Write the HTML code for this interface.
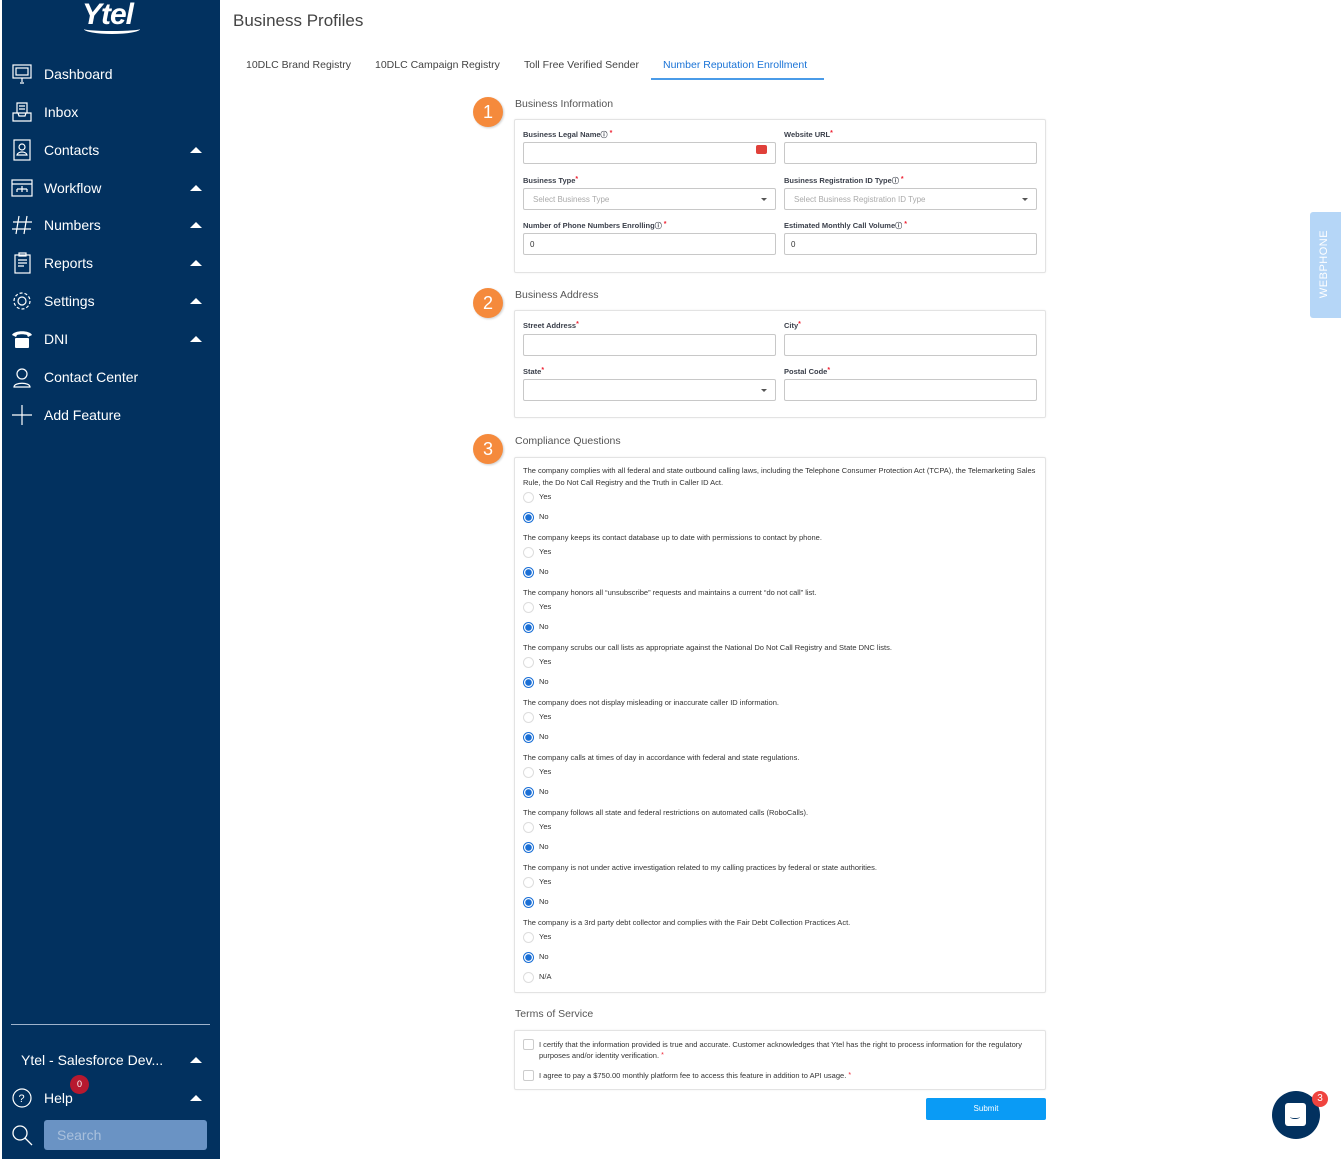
<!DOCTYPE html>
<html><head><meta charset="utf-8"><style>
*{margin:0;padding:0;box-sizing:border-box}
body{width:1341px;height:1159px;background:#fff;font-family:"Liberation Sans",sans-serif;position:relative;overflow:hidden;color:#333}
.a{position:absolute}
#sb{left:2px;top:0;width:218px;height:1159px;background:#02315f}
.ni{position:absolute;left:44px;color:#fff;font-size:14px;line-height:18px}
.ic{position:absolute;left:11px;width:22px;height:22px}
.tri{position:absolute;left:190px;width:0;height:0;border-left:6px solid transparent;border-right:6px solid transparent;border-bottom:6px solid #fff}
.box{position:absolute;border:1px solid #e3e3e3;border-radius:2px;background:#fff;box-shadow:0 0 2px rgba(0,0,0,.06)}
.lbl{position:absolute;font-size:7.5px;font-weight:bold;color:#3a3f4a}
.req{color:#e23;font-size:7px;vertical-align:top}
.inp{position:absolute;height:22px;border:1px solid #c8c8c8;border-radius:2px;background:#fff;font-size:8px;color:#333;padding:6px 6px}
.sel{color:#aaa}
.sel:after{content:"";position:absolute;right:8px;top:9px;border-left:3px solid transparent;border-right:3px solid transparent;border-top:3px solid #555}
.num{position:absolute;left:473px;width:30px;height:30px;border-radius:50%;background:#f58a3c;color:#fff;font-size:18px;text-align:center;line-height:30px;box-shadow:1px 1px 2px rgba(0,0,0,.2)}
.st{position:absolute;left:515px;font-size:10.5px;color:#555}
.q{position:absolute;left:523px;font-size:7.5px;color:#333;width:515px;line-height:12px}
.r{position:absolute;left:523px;width:11px;height:11px;border-radius:50%;border:1px solid #ddd;background:#fff}
.r.on{border:1px solid #1a6fd6;background:radial-gradient(circle,#1a6fd6 3px,#fff 3.5px)}
.rl{position:absolute;left:539px;font-size:7.5px;color:#333}
.cb{position:absolute;left:523px;width:11px;height:11px;border:1px solid #ccc;border-radius:2px}
.ti{color:#fff;background:#333}
</style></head><body>
<div id="sb" class="a"></div>
<div class="a" style="left:82px;top:-2px;color:#fff;font-size:30px;font-weight:bold;font-style:italic;letter-spacing:-1px">Ytel</div>
<div class="a" style="left:84px;top:24px;width:56px;height:10px;border-bottom:3px solid #fff;border-radius:0 0 50% 50%"></div>

<svg class="ic" style="top:63px" viewBox="0 0 22 22" fill="none" stroke="#fff" stroke-width="1.2"><rect x="2" y="2" width="18" height="13"/><rect x="5" y="5" width="12" height="7"/><path d="M11 15v4M9 20h4"/></svg>
<div class="ni" style="top:65px">Dashboard</div>
<svg class="ic" style="top:101px" viewBox="0 0 22 22" fill="none" stroke="#fff" stroke-width="1.2"><path d="M6 2h10v10H6zM2 12h5l1 3h6l1-3h5v8H2z"/><path d="M8 5h6M8 8h6"/></svg>
<div class="ni" style="top:103px">Inbox</div>
<svg class="ic" style="top:139px" viewBox="0 0 22 22" fill="none" stroke="#fff" stroke-width="1.2"><rect x="3" y="1" width="16" height="20"/><circle cx="11" cy="8" r="3"/><path d="M6 16c1-4 9-4 10 0z"/></svg>
<div class="ni" style="top:141px">Contacts</div><div class="tri" style="top:147px"></div>
<svg class="ic" style="top:177px" viewBox="0 0 22 22" fill="none" stroke="#fff" stroke-width="1.2"><rect x="1" y="3" width="20" height="16"/><path d="M1 7h20M11 9v3M6 12h10M6 12v3M11 12v3M16 12v3"/></svg>
<div class="ni" style="top:179px">Workflow</div><div class="tri" style="top:185px"></div>
<svg class="ic" style="top:214px" viewBox="0 0 22 22" fill="none" stroke="#fff" stroke-width="1.2"><path d="M8 2L5 20M16 2l-3 18M2 8h19M1 15h19"/></svg>
<div class="ni" style="top:216px">Numbers</div><div class="tri" style="top:222px"></div>
<svg class="ic" style="top:252px" viewBox="0 0 22 22" fill="none" stroke="#fff" stroke-width="1.2"><rect x="4" y="3" width="15" height="18"/><rect x="8" y="1" width="7" height="3"/><path d="M7 8h9M7 11h9M7 14h6"/></svg>
<div class="ni" style="top:254px">Reports</div><div class="tri" style="top:260px"></div>
<svg class="ic" style="top:290px" viewBox="0 0 22 22" fill="none" stroke="#fff" stroke-width="1.2"><circle cx="11" cy="11" r="4"/><circle cx="11" cy="11" r="8" stroke-dasharray="3 2"/></svg>
<div class="ni" style="top:292px">Settings</div><div class="tri" style="top:298px"></div>
<svg class="ic" style="top:328px" viewBox="0 0 22 22" fill="#fff"><path d="M1 7c2-5 18-5 20 0l-4 2-1-2c-3-1-7-1-10 0L5 9z"/><rect x="4" y="10" width="14" height="10" rx="1"/></svg>
<div class="ni" style="top:330px">DNI</div><div class="tri" style="top:336px"></div>
<svg class="ic" style="top:366px" viewBox="0 0 22 22" fill="none" stroke="#fff" stroke-width="1.2"><circle cx="11" cy="8" r="5"/><path d="M3 21c0-5 16-5 16 0z"/></svg>
<div class="ni" style="top:368px">Contact Center</div>
<svg class="ic" style="top:404px" viewBox="0 0 22 22" fill="none" stroke="#fff" stroke-width="1.2"><path d="M11 1v20M1 11h20"/></svg>
<div class="ni" style="top:406px">Add Feature</div>

<div class="a" style="left:11px;top:1024px;width:199px;height:1px;background:#9fb3cc"></div>
<div class="ni" style="left:21px;top:1051px">Ytel - Salesforce Dev...</div><div class="tri" style="top:1057px"></div>
<svg class="ic" style="top:1087px" viewBox="0 0 22 22" fill="none" stroke="#fff" stroke-width="1.2"><circle cx="11" cy="11" r="9"/><text x="7.5" y="15" fill="#fff" stroke="none" font-size="11" font-family="Liberation Sans">?</text></svg>
<div class="ni" style="top:1089px">Help</div><div class="tri" style="top:1095px"></div>
<div class="a" style="left:70px;top:1075px;width:19px;height:19px;border-radius:50%;background:#b7192f;color:#fff;font-size:9px;text-align:center;line-height:19px">0</div>
<svg class="ic" style="top:1124px" viewBox="0 0 22 22" fill="none" stroke="#fff" stroke-width="1.3"><circle cx="9" cy="9" r="7"/><path d="M14 14l7 7"/></svg>
<div class="a" style="left:44px;top:1120px;width:163px;height:30px;background:#6a93c4;border-radius:3px;color:#a9c0dc;font-size:14px;padding:7px 13px">Search</div>

<div class="a" style="left:233px;top:11px;font-size:17px;color:#444">Business Profiles</div>
<div class="a" style="left:246px;top:59px;font-size:10.5px;color:#444">10DLC Brand Registry</div>
<div class="a" style="left:375px;top:59px;font-size:10.5px;color:#444">10DLC Campaign Registry</div>
<div class="a" style="left:524px;top:59px;font-size:10.5px;color:#444">Toll Free Verified Sender</div>
<div class="a" style="left:663px;top:59px;font-size:10.5px;color:#1a73d6">Number Reputation Enrollment</div>
<div class="a" style="left:651px;top:78px;width:173px;height:2px;background:#4a9be8"></div>

<div class="num" style="top:97px">1</div><div class="st" style="top:98px">Business Information</div>
<div class="box" style="left:514px;top:119px;width:532px;height:154px"></div>
<div class="lbl" style="left:523px;top:130px">Business Legal Name<span style="font-size:7px">ⓘ</span> <span class="req">*</span></div>
<div class="inp" style="left:523px;top:142px;width:253px"></div>
<div class="a" style="left:756px;top:145px;width:11px;height:9px;background:#e0403a;border-radius:2px"></div>
<div class="lbl" style="left:784px;top:130px">Website URL<span class="req">*</span></div>
<div class="inp" style="left:784px;top:142px;width:253px"></div>
<div class="lbl" style="left:523px;top:176px">Business Type<span class="req">*</span></div>
<div class="inp sel" style="left:523px;top:188px;width:253px;padding-left:9px">Select Business Type</div>
<div class="lbl" style="left:784px;top:176px">Business Registration ID Type<span style="font-size:7px">ⓘ</span> <span class="req">*</span></div>
<div class="inp sel" style="left:784px;top:188px;width:253px;padding-left:9px">Select Business Registration ID Type</div>
<div class="lbl" style="left:523px;top:221px">Number of Phone Numbers Enrolling<span style="font-size:7px">ⓘ</span> <span class="req">*</span></div>
<div class="inp" style="left:523px;top:233px;width:253px">0</div>
<div class="lbl" style="left:784px;top:221px">Estimated Monthly Call Volume<span style="font-size:7px">ⓘ</span> <span class="req">*</span></div>
<div class="inp" style="left:784px;top:233px;width:253px">0</div>

<div class="num" style="top:288px">2</div><div class="st" style="top:289px">Business Address</div>
<div class="box" style="left:514px;top:310px;width:532px;height:108px"></div>
<div class="lbl" style="left:523px;top:321px">Street Address<span class="req">*</span></div>
<div class="inp" style="left:523px;top:334px;width:253px"></div>
<div class="lbl" style="left:784px;top:321px">City<span class="req">*</span></div>
<div class="inp" style="left:784px;top:334px;width:253px"></div>
<div class="lbl" style="left:523px;top:367px">State<span class="req">*</span></div>
<div class="inp sel" style="left:523px;top:379px;width:253px"></div>
<div class="lbl" style="left:784px;top:367px">Postal Code<span class="req">*</span></div>
<div class="inp" style="left:784px;top:379px;width:253px"></div>

<div class="num" style="top:434px">3</div><div class="st" style="top:435px">Compliance Questions</div>
<div class="box" style="left:514px;top:457px;width:532px;height:536px"></div>
<div class="q" style="top:465px">The company complies with all federal and state outbound calling laws, including the Telephone Consumer Protection Act (TCPA), the Telemarketing Sales Rule, the Do Not Call Registry and the Truth in Caller ID Act.</div>
<div class="r" style="top:492px"></div><div class="rl" style="top:492px">Yes</div>
<div class="r on" style="top:512px"></div><div class="rl" style="top:512px">No</div>

<div class="q" style="top:532px">The company keeps its contact database up to date with permissions to contact by phone.</div>
<div class="r" style="top:547px"></div><div class="rl" style="top:547px">Yes</div>
<div class="r on" style="top:567px"></div><div class="rl" style="top:567px">No</div>
<div class="q" style="top:587px">The company honors all “unsubscribe” requests and maintains a current “do not call” list.</div>
<div class="r" style="top:602px"></div><div class="rl" style="top:602px">Yes</div>
<div class="r on" style="top:622px"></div><div class="rl" style="top:622px">No</div>
<div class="q" style="top:642px">The company scrubs our call lists as appropriate against the National Do Not Call Registry and State DNC lists.</div>
<div class="r" style="top:657px"></div><div class="rl" style="top:657px">Yes</div>
<div class="r on" style="top:677px"></div><div class="rl" style="top:677px">No</div>
<div class="q" style="top:697px">The company does not display misleading or inaccurate caller ID information.</div>
<div class="r" style="top:712px"></div><div class="rl" style="top:712px">Yes</div>
<div class="r on" style="top:732px"></div><div class="rl" style="top:732px">No</div>
<div class="q" style="top:752px">The company calls at times of day in accordance with federal and state regulations.</div>
<div class="r" style="top:767px"></div><div class="rl" style="top:767px">Yes</div>
<div class="r on" style="top:787px"></div><div class="rl" style="top:787px">No</div>
<div class="q" style="top:807px">The company follows all state and federal restrictions on automated calls (RoboCalls).</div>
<div class="r" style="top:822px"></div><div class="rl" style="top:822px">Yes</div>
<div class="r on" style="top:842px"></div><div class="rl" style="top:842px">No</div>
<div class="q" style="top:862px">The company is not under active investigation related to my calling practices by federal or state authorities.</div>
<div class="r" style="top:877px"></div><div class="rl" style="top:877px">Yes</div>
<div class="r on" style="top:897px"></div><div class="rl" style="top:897px">No</div>
<div class="q" style="top:917px">The company is a 3rd party debt collector and complies with the Fair Debt Collection Practices Act.</div>
<div class="r" style="top:932px"></div><div class="rl" style="top:932px">Yes</div>
<div class="r on" style="top:952px"></div><div class="rl" style="top:952px">No</div>
<div class="r" style="top:972px"></div><div class="rl" style="top:972px">N/A</div>

<div class="st" style="top:1008px">Terms of Service</div>
<div class="box" style="left:514px;top:1030px;width:532px;height:60px"></div>
<div class="cb" style="top:1039px"></div>
<div class="q" style="left:539px;top:1039px;width:500px;line-height:11px">I certify that the information provided is true and accurate. Customer acknowledges that Ytel has the right to process information for the regulatory purposes and/or identity verification. <span class="req">*</span></div>
<div class="cb" style="top:1070px"></div>
<div class="q" style="left:539px;top:1070px">I agree to pay a $750.00 monthly platform fee to access this feature in addition to API usage. <span class="req">*</span></div>
<div class="a" style="left:926px;top:1098px;width:120px;height:22px;background:#0a9bf5;border-radius:2px;color:#fff;font-size:8px;text-align:center;line-height:22px">Submit</div>

<div class="a" style="left:1310px;top:212px;width:31px;height:106px;background:#b5d6f7;border-radius:3px 0 0 3px"></div>
<div class="a" style="left:1274px;top:258px;width:100px;text-align:center;transform:rotate(-90deg);color:#fff;font-size:11px;letter-spacing:.5px">WEBPHONE</div>

<div class="a" style="left:1272px;top:1091px;width:48px;height:48px;border-radius:50%;background:#02315f"></div>
<div class="a" style="left:1285px;top:1103px;width:21px;height:23px;background:#fff;border-radius:3px"></div>
<div class="a" style="left:1290px;top:1115px;width:10px;height:4px;border-bottom:1.5px solid #02315f;border-radius:0 0 50% 50%"></div>
<div class="a" style="left:1312px;top:1091px;width:16px;height:16px;border-radius:50%;background:#f0443f;color:#fff;font-size:10px;text-align:center;line-height:16px">3</div>
</body></html>
